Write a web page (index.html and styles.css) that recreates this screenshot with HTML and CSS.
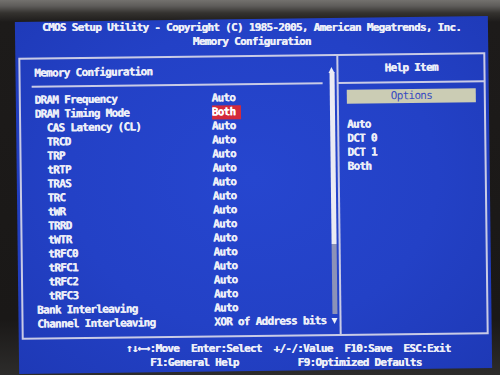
FILE: index.html
```html
<!DOCTYPE html>
<html lang="en">
<head>
<meta charset="utf-8">
<title>CMOS Setup Utility - Memory Configuration</title>
<link rel="stylesheet" href="styles.css">
</head>
<body>
<div class="screen">
  <div class="title">CMOS Setup Utility - Copyright (C) 1985-2005, American Megatrends, Inc.</div>
  <div class="subtitle">Memory Configuration</div>

  <div class="frame"></div>
  <div class="vsep"></div>
  <div class="rule-left"></div>
  <div class="rule-right"></div>

  <div class="pane-title">Memory Configuration</div>
  <div class="help-title">Help Item</div>

  <div class="scroll-up"></div>
  <div class="scroll-thumb"></div>
  <div class="scroll-track"></div>
  <div class="scroll-down"></div>

  <div class="settings">
    <div class="label">DRAM Frequency</div><div class="value">Auto</div>
    <div class="label">DRAM Timing Mode</div><div class="value"><span class="selected">Both</span></div>
    <div class="label sub">CAS Latency (CL)</div><div class="value">Auto</div>
    <div class="label sub">TRCD</div><div class="value">Auto</div>
    <div class="label sub">TRP</div><div class="value">Auto</div>
    <div class="label sub">tRTP</div><div class="value">Auto</div>
    <div class="label sub">TRAS</div><div class="value">Auto</div>
    <div class="label sub">TRC</div><div class="value">Auto</div>
    <div class="label sub">tWR</div><div class="value">Auto</div>
    <div class="label sub">TRRD</div><div class="value">Auto</div>
    <div class="label sub">tWTR</div><div class="value">Auto</div>
    <div class="label sub">tRFC0</div><div class="value">Auto</div>
    <div class="label sub">tRFC1</div><div class="value">Auto</div>
    <div class="label sub">tRFC2</div><div class="value">Auto</div>
    <div class="label sub">tRFC3</div><div class="value">Auto</div>
    <div class="label">Bank Interleaving</div><div class="value">Auto</div>
    <div class="label">Channel Interleaving</div><div class="value">XOR of Address bits</div>
  </div>

  <div class="options">Options</div>
  <div class="help-list">
    <div>Auto</div>
    <div>DCT 0</div>
    <div>DCT 1</div>
    <div>Both</div>
  </div>

  <div class="footer-1">↑↓←→:Move  Enter:Select  +/-/:Value  F10:Save  ESC:Exit</div>
  <div class="footer-2">F1:General Help          F9:Optimized Defaults</div>
</div>
</body>
</html>
```

FILE: styles.css
```css
html, body {
  margin: 0;
  padding: 0;
}

body {
  width: 500px;
  height: 375px;
  overflow: hidden;
  background: linear-gradient(180deg, #73716e 0px, #5e5c5a 6px, #34322f 13px, #1d1b1a 22px, #1a1817 85%, #2d2c2b 100%);
}

.screen {
  box-sizing: content-box;
  width: 472px;
  height: 350px;
  margin: 19px 0 0 17px;
  padding: 2px 0 0 1px;
  display: grid;
  grid-template-columns: repeat(80, 5.9px);
  grid-template-rows: repeat(25, 14px);
  background: radial-gradient(ellipse at 50% 45%, #2646cf 0%, #2341c6 55%, #1e39b6 100%);
  color: #eceef8;
  font-family: "DejaVu Sans Mono", "Liberation Mono", monospace;
  font-weight: bold;
  font-size: 11px;
  letter-spacing: -0.72px;
  line-height: 14px;
  white-space: pre;
  text-shadow: 0.35px 0 0 currentColor;
  transform: rotate(-0.7deg);
  transform-origin: 50% 50%;
}

.title,
.subtitle,
.footer-1,
.footer-2 {
  transform: rotate(0.7deg);
}

.title {
  grid-row: 1;
  grid-column: 1 / -1;
  text-align: center;
}

.subtitle {
  grid-row: 2;
  grid-column: 1 / -1;
  text-align: center;
}

.frame {
  grid-row: 3 / 24;
  grid-column: 1 / -1;
  margin: 6px 2px;
  border: 2px solid #c9cbe6;
}

.vsep {
  grid-row: 3 / 24;
  grid-column: 55;
  justify-self: center;
  width: 2px;
  margin: 6px 0;
  background: #c9cbe6;
}

.rule-left {
  grid-row: 5;
  grid-column: 3 / 53;
  align-self: center;
  height: 2px;
  margin-left: 3px;
  background: #c9cbe6;
}

.rule-right {
  grid-row: 5;
  grid-column: 55 / 81;
  align-self: center;
  height: 2px;
  margin: 0 3px;
  background: #c9cbe6;
}

.pane-title {
  grid-row: 4;
  grid-column: 4 / 53;
  align-self: center;
  line-height: 10px;
  margin-top: 2px;
}

.help-title {
  grid-row: 4;
  grid-column: 56 / 80;
  text-align: center;
  align-self: center;
  line-height: 10px;
}

.scroll-up {
  grid-row: 4;
  grid-column: 54;
  justify-self: center;
  align-self: center;
  width: 0;
  height: 0;
  margin-top: 2px;
  border-left: 3px solid transparent;
  border-right: 3px solid transparent;
  border-bottom: 6px solid #eceef8;
}

.scroll-thumb {
  grid-row: 5 / 17;
  grid-column: 54;
  justify-self: center;
  width: 5px;
  margin-top: -4px;
  background: #ebebf3;
}

.scroll-track {
  grid-row: 17 / 22;
  grid-column: 54;
  justify-self: center;
  width: 5px;
  background: #8c92b8;
}

.scroll-down {
  grid-row: 22;
  grid-column: 54;
  justify-self: center;
  align-self: center;
  width: 0;
  height: 0;
  border-left: 3px solid transparent;
  border-right: 3px solid transparent;
  border-top: 6px solid #eceef8;
}

.settings {
  grid-row: 6 / 23;
  grid-column: 4 / 54;
  display: grid;
  grid-template-columns: 177px 1fr;
  grid-auto-rows: 14px;
}

.label.sub {
  padding-left: 11.8px;
}

.selected {
  display: inline-block;
  padding-right: 5.9px;
  background: #d42a3c;
  color: #ffffff;
}

.options {
  grid-row: 6;
  grid-column: 57 / 79;
  background: #cbccb4;
  color: #3a4cc0;
  font-weight: normal;
  text-shadow: none;
  text-align: center;
}

.help-list {
  grid-row: 8 / 12;
  grid-column: 57 / 79;
  display: grid;
  grid-auto-rows: 14px;
}

.footer-1 {
  grid-row: 24;
  grid-column: 19 / -1;
}

.footer-2 {
  grid-row: 25;
  grid-column: 23 / -1;
}
```
